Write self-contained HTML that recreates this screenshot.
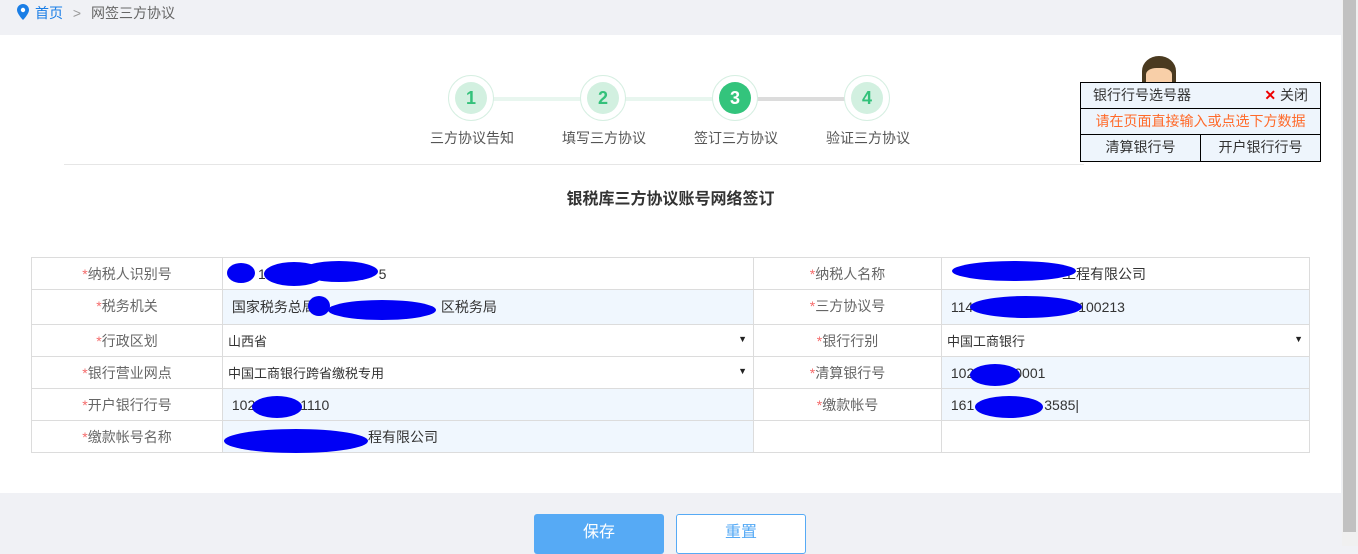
<!DOCTYPE html><html><head><meta charset="utf-8"><style>
*{margin:0;padding:0;box-sizing:border-box}
body{width:1358px;height:546px;overflow:hidden;background:#f0f1f5;font-family:"Liberation Sans","Noto Sans CJK SC",sans-serif;font-size:14px;color:#333;position:relative}
.abs{position:absolute}
.panel{left:0;top:35px;width:1341px;height:458px;background:#fff}
.bc{left:17px;top:3px;font-size:14px;color:#666}
.bc a{color:#1a7ee6;text-decoration:none}
.step{position:absolute;top:75px;width:46px;height:46px;border-radius:50%;border:1px solid #d6efe2;background:#fff}
.step b{position:absolute;left:6px;top:6px;width:32px;height:32px;border-radius:50%;background:#d2f0e0;color:#33c17a;font-size:18px;text-align:center;line-height:32px}
.step.on b{background:#33c47c;color:#fff}
.sl{position:absolute;top:128px;font-size:14px;color:#555;width:120px;text-align:center}
table{position:absolute;left:31px;top:257px;border-collapse:collapse}
td{border:1px solid #dcdcdc;height:32px;font-size:14px;padding:0 5px}
td.l{text-align:center;color:#666;vertical-align:top;padding-top:6px}
td.l:before{content:"*";color:#f56c6c}
.bl{background:#f0f7fe}
.sel{position:relative;font-size:13px}
.sel:after{content:"▼";position:absolute;right:6px;top:9px;font-size:9px;color:#222}
.blob{position:absolute;background:#0000f5;border-radius:50%}
.pk{left:1080px;top:82px;width:241px;border:1px solid #000;background:#eef5fc;font-size:14px}
.pk div{height:26px;line-height:25px;border-bottom:1px solid #000}
</style></head><body>
<div class="abs panel"></div>
<div class="abs bc"><svg width="12" height="16" viewBox="0 0 12 16" style="vertical-align:-2px;margin-right:6px"><path d="M6 0C2.7 0 0 2.6 0 5.9 0 10 6 16 6 16s6-6 6-10.1C12 2.6 9.3 0 6 0z" fill="#1a7ee6"/><circle cx="6" cy="6" r="2.2" fill="#fff"/></svg><a>首页</a> <span style="color:#999;margin:0 6px">&gt;</span> 网签三方协议</div>
<div class="abs" style="left:492px;top:97px;width:246px;height:4px;background:#e8f6ef"></div>
<div class="abs" style="left:738px;top:97px;width:130px;height:4px;background:#dcdcdc"></div>
<div class="step" style="left:448px"><b>1</b></div>
<div class="step" style="left:580px"><b>2</b></div>
<div class="step on" style="left:712px"><b>3</b></div>
<div class="step" style="left:844px"><b>4</b></div>
<div class="sl" style="left:412px">三方协议告知</div>
<div class="sl" style="left:544px">填写三方协议</div>
<div class="sl" style="left:676px">签订三方协议</div>
<div class="sl" style="left:808px">验证三方协议</div>
<div class="abs" style="left:64px;top:164px;width:1020px;height:1px;background:#e6e6e6"></div>
<div class="abs" style="left:0;width:1341px;top:185px;text-align:center;font-size:16px;font-weight:bold;color:#333">银税库三方协议账号网络签订</div>
<table>
<tr><td class="l" style="width:191px">纳税人识别号</td><td style="width:531px;padding-left:35px">1&nbsp;&nbsp;&nbsp;&nbsp;&nbsp;&nbsp;&nbsp;&nbsp;&nbsp;&nbsp;&nbsp;&nbsp;&nbsp;&nbsp;&nbsp;&nbsp;&nbsp;&nbsp;&nbsp;&nbsp;&nbsp;&nbsp;&nbsp;&nbsp;&nbsp;&nbsp;&nbsp;&nbsp;&nbsp;5</td><td class="l" style="width:188px">纳税人名称</td><td style="width:368px;padding-left:120px">工程有限公司</td></tr>
<tr><td class="l" style="height:35px">税务机关</td><td class="bl">&nbsp;国家税务总局<span style="padding-left:125px">区税务局</span></td><td class="l">三方协议号</td><td class="bl">&nbsp;114<span style="padding-left:105px">100213</span></td></tr>
<tr><td class="l">行政区划</td><td class="sel">山西省</td><td class="l">银行行别</td><td class="sel">中国工商银行</td></tr>
<tr><td class="l">银行营业网点</td><td class="sel">中国工商银行跨省缴税专用</td><td class="l">清算银行号</td><td class="bl">&nbsp;102<span style="padding-left:40px">0001</span></td></tr>
<tr><td class="l">开户银行行号</td><td class="bl">&nbsp;102<span style="padding-left:45px">1110</span></td><td class="l">缴款帐号</td><td class="bl">&nbsp;161<span style="padding-left:70px">3585|</span></td></tr>
<tr><td class="l">缴款帐号名称</td><td class="bl" style="text-align:left;padding-left:145px">程有限公司</td><td></td><td></td></tr>
</table>
<div class="blob" style="left:227px;top:263px;width:28px;height:20px"></div>
<div class="blob" style="left:264px;top:262px;width:60px;height:24px"></div>
<div class="blob" style="left:300px;top:261px;width:78px;height:21px"></div>
<div class="blob" style="left:308px;top:296px;width:22px;height:20px"></div>
<div class="blob" style="left:328px;top:300px;width:108px;height:20px"></div>
<div class="blob" style="left:952px;top:261px;width:124px;height:20px"></div>
<div class="blob" style="left:970px;top:296px;width:112px;height:22px"></div>
<div class="blob" style="left:970px;top:364px;width:50px;height:22px"></div>
<div class="blob" style="left:252px;top:396px;width:50px;height:22px"></div>
<div class="blob" style="left:975px;top:396px;width:68px;height:22px"></div>
<div class="blob" style="left:224px;top:429px;width:144px;height:24px"></div>
<div class="abs" style="left:1142px;top:56px;width:34px;height:30px;border-radius:50% 50% 0 0;background:#4a3a20"></div>
<div class="abs" style="left:1146px;top:68px;width:26px;height:16px;border-radius:40% 40% 0 0;background:#f8cfa8"></div>
<div class="abs pk">
<div style="padding:0 12px;display:flex;justify-content:space-between"><span>银行行号选号器</span><span><span style="color:#e00;font-weight:bold">✕</span> 关闭</span></div>
<div style="text-align:center;color:#ff6a2a">请在页面直接输入或点选下方数据</div>
<div style="display:flex;border-bottom:none"><span style="width:120px;text-align:center;border-right:1px solid #000">清算银行号</span><span style="flex:1;text-align:center">开户银行行号</span></div>
</div>
<div class="abs" style="left:534px;top:514px;width:130px;height:40px;background:#56aaf5;border-radius:3px;color:#fff;font-size:16px;text-align:center;line-height:38px">保存</div>
<div class="abs" style="left:676px;top:514px;width:130px;height:40px;background:#fff;border:1px solid #56aaf5;border-radius:3px;color:#56aaf5;font-size:16px;text-align:center;line-height:36px">重置</div>
<div class="abs" style="left:1342px;top:0;width:16px;height:546px;background:#f0f0f0"></div>
<div class="abs" style="left:1343px;top:0;width:13px;height:532px;background:#c1c1c1"></div>
</body></html>
